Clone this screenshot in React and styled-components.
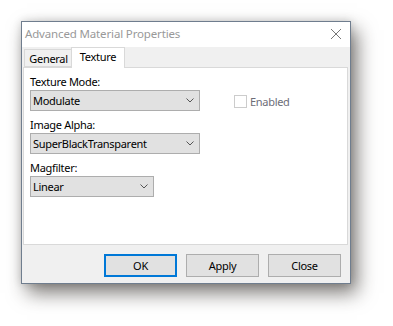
import React from "react";
import styled, { createGlobalStyle } from "styled-components";

const Global = createGlobalStyle`
  html, body { margin: 0; padding: 0; background: #ffffff; }
  body { font-family: "Noto Sans", "Segoe UI", sans-serif; font-size: 11px; letter-spacing: -0.3px; color: #000; }
  * { box-sizing: border-box; }
`;

const Page = styled.div`
  padding: 21px;
  width: 393px;
  height: 326px;
  overflow: hidden;
`;

const Window = styled.div`
  width: 330px;
  height: 263px;
  border: 1px solid #6f7d8e;
  background: #f0f0f0;
  display: flex;
  flex-direction: column;
  box-shadow: 6px 9px 18px rgba(40, 35, 30, 0.6), 0 0 8px rgba(0, 0, 0, 0.15);
`;

const TitleBar = styled.div`
  height: 25px;
  background: #ffffff;
  display: flex;
  align-items: center;
  justify-content: space-between;
  padding: 0 9px 1px 3px;
`;

const Title = styled.span`
  color: #999999;
  font-size: 11.5px;
  letter-spacing: -0.15px;
  line-height: 16px;
`;

const CloseIcon = styled.svg`
  width: 10px;
  height: 10px;
  display: block;
`;

const TabStrip = styled.div`
  height: 20px;
  display: flex;
  align-items: flex-end;
  padding-left: 2px;
  position: relative;
  z-index: 1;
`;

const Tab = styled.div`
  width: ${(p) => p.$w}px;
  height: ${(p) => (p.$active ? "21px" : "18px")};
  margin-bottom: ${(p) => (p.$active ? "-1px" : "0")};
  padding: ${(p) => (p.$active ? "0 0 3px 0" : "0 0 0 1px")};
  background: ${(p) => (p.$active ? "#ffffff" : "#f0f0f0")};
  border: 1px solid #d9d9d9;
  border-bottom: ${(p) => (p.$active ? "none" : "1px solid #d9d9d9")};
  border-right: ${(p) => (p.$active ? "1px solid #d9d9d9" : "none")};
  display: flex;
  align-items: center;
  justify-content: center;
  line-height: 15px;
`;

const Panel = styled.div`
  height: 178px;
  margin: 0 2px 0 1px;
  background: #ffffff;
  border: 1px solid #d9d9d9;
  padding: 6px 0 0 6px;
  display: flex;
  flex-direction: column;
  gap: 6px;
`;

const Field = styled.div`
  display: flex;
  flex-direction: column;
  gap: 1px;
`;

const Label = styled.div`
  line-height: 15px;
  height: 15px;
`;

const Row = styled.div`
  display: flex;
  align-items: center;
`;

const Select = styled.div`
  width: ${(p) => p.$w}px;
  height: 21px;
  background: #e1e1e1;
  border: 1px solid #adadad;
  display: flex;
  align-items: center;
  justify-content: space-between;
  padding: 0 5px 0 2px;
  line-height: 15px;
`;

const Chevron = styled.svg`
  width: 8px;
  height: 5px;
  display: block;
`;

const Check = styled.label`
  display: flex;
  align-items: center;
  margin-left: 34px;
  margin-top: 1px;
  color: #6d6d78;
  gap: 3px;
`;

const Box = styled.span`
  width: 13px;
  height: 13px;
  border: 1px solid #cccccc;
  background: #ffffff;
  display: block;
`;

const ButtonRow = styled.div`
  flex: 1;
  display: flex;
  justify-content: flex-end;
  align-items: flex-start;
  padding: 9px 9px 0 0;
  gap: 9px;
`;

const Button = styled.div`
  width: 73px;
  height: 23px;
  background: #e1e1e1;
  border: ${(p) => (p.$default ? "2px solid #0078d7" : "1px solid #adadad")};
  display: flex;
  align-items: center;
  justify-content: center;
  line-height: 15px;
`;

const Down = () => (
  <Chevron viewBox="0 0 8 5">
    <path d="M0.5 0.5 L4 4 L7.5 0.5" fill="none" stroke="#555" strokeWidth="1" />
  </Chevron>
);

export default function App() {
  return (
    <>
      <Global />
      <Page>
        <Window>
          <TitleBar>
            <Title>Advanced Material Properties</Title>
            <CloseIcon viewBox="0 0 10 10">
              <path d="M0 0 L10 10 M10 0 L0 10" stroke="#777" strokeWidth="1" />
            </CloseIcon>
          </TitleBar>
          <TabStrip>
            <Tab $w={47}>General</Tab>
            <Tab $w={54} $active>Texture</Tab>
          </TabStrip>
          <Panel>
            <Field>
              <Label>Texture Mode:</Label>
              <Row>
                <Select $w={170}>
                  <span>Modulate</span>
                  <Down />
                </Select>
                <Check>
                  <Box />
                  <span>Enabled</span>
                </Check>
              </Row>
            </Field>
            <Field>
              <Label>Image Alpha:</Label>
              <Select $w={170}>
                <span>SuperBlackTransparent</span>
                <Down />
              </Select>
            </Field>
            <Field>
              <Label>Magfilter:</Label>
              <Select $w={124}>
                <span>Linear</span>
                <Down />
              </Select>
            </Field>
          </Panel>
          <ButtonRow>
            <Button $default>OK</Button>
            <Button>Apply</Button>
            <Button>Close</Button>
          </ButtonRow>
        </Window>
      </Page>
    </>
  );
}
